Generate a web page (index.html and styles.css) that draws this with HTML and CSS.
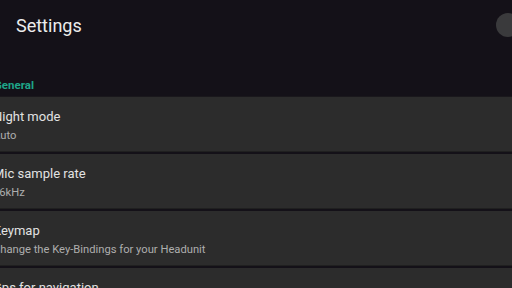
FILE: index.html
```html
<!DOCTYPE html>
<html>
<head>
    <title>Settings</title>
    <link rel="stylesheet" href="styles.css">
</head>
<body>
    <header class="toolbar">
        <h1 class="toolbarTitle">Settings</h1>
        <span class="toolbarKnob"></span>
    </header>

    <div class="category">General</div>

    <ul class="prefList">
        <li class="prefItem">
            <span class="prefTitle">Night mode</span>
            <span class="prefSummary">Auto</span>
        </li>
        <li class="prefItem">
            <span class="prefTitle">Mic sample rate</span>
            <span class="prefSummary">16kHz</span>
        </li>
        <li class="prefItem">
            <span class="prefTitle">Keymap</span>
            <span class="prefSummary">Change the Key-Bindings for your Headunit</span>
        </li>
        <li class="prefItem">
            <span class="prefTitle">Gps for navigation</span>
            <span class="prefSummary">Use GPS from the phone</span>
        </li>
    </ul>
</body>
</html>
```

FILE: styles.css
```css
body {
    font-family: Roboto, 'Noto Sans', sans-serif;
    background-color: #141118;
    margin: 0;
    padding: 0;
    height: 288px;
    overflow: hidden;
}

.toolbar {
    position: relative;
    height: 52px;
    display: flex;
    align-items: center;
    padding-left: 16px;
}

.toolbarTitle {
    margin: 0;
    font-size: 18px;
    font-weight: 400;
    color: #ececec;
    line-height: 1;
}

.toolbarKnob {
    position: absolute;
    right: -8px;
    top: 13px;
    width: 24px;
    height: 24px;
    border-radius: 50%;
    background-color: #3a3a3c;
}

.category {
    margin-top: 26px;
    margin-left: -6px;
    height: 18px;
    font-size: 11.5px;
    font-weight: 700;
    color: #1ea588;
    line-height: 14px;
}

.prefList {
    list-style: none;
    margin: 0;
    padding: 0;
    border-top: 1px solid #1a181c;
}

.prefItem {
    display: flex;
    flex-direction: column;
    height: 55px;
    padding-left: 0;
    margin-left: -7px;
    margin-bottom: 2px;
    background-color: #2c2c2c;
    border-bottom: 1px solid #202020;
    box-sizing: border-box;
    padding-top: 12px;
}

.prefTitle {
    font-size: 13px;
    color: #e2e2e2;
    line-height: 16px;
}

.prefSummary {
    margin-top: 4px;
    font-size: 11.2px;
    color: #aeaeae;
    line-height: 14px;
}
```
